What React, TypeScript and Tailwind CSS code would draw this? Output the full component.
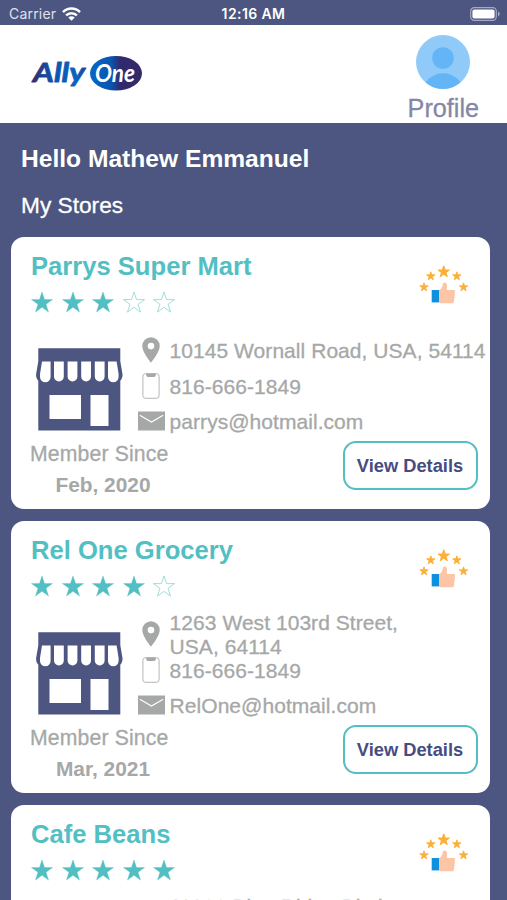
import clsx from "clsx";

interface Store {
  name: string;
  rating: number;
  address: string[];
  phone: string;
  email: string;
  since: string;
}

const stores: Store[] = [
  {
    name: "Parrys Super Mart",
    rating: 3,
    address: ["10145 Wornall Road, USA, 54114"],
    phone: "816-666-1849",
    email: "parrys@hotmail.com",
    since: "Feb, 2020",
  },
  {
    name: "Rel One Grocery",
    rating: 4,
    address: ["1263 West 103rd Street,", "USA, 64114"],
    phone: "816-666-1849",
    email: "RelOne@hotmail.com",
    since: "Mar, 2021",
  },
  {
    name: "Cafe Beans",
    rating: 5,
    address: ["11900 Blue Ridge Blvd,", "USA, 64134"],
    phone: "816-666-1849",
    email: "CafeBeans@hotmail.com",
    since: "Apr, 2021",
  },
];

const STAR = "12,0.5 14.8,8.9 23.5,8.9 16.4,14 19.1,22.5 12,17.3 4.9,22.5 7.6,14 0.5,8.9 9.2,8.9";

const Logo = () => (
  <svg className="h-[40px] w-[114px]" viewBox="0 0 114 40">
    <defs>
      <linearGradient id="ally" x1="0" x2="1" y1="0" y2="0">
        <stop offset="0" stopColor="#352a6b" />
        <stop offset="0.4" stopColor="#0b55b0" />
        <stop offset="0.85" stopColor="#0a62c0" />
        <stop offset="1" stopColor="#24408f" />
      </linearGradient>
      <linearGradient id="oval" x1="0" x2="1" y1="0" y2="0">
        <stop offset="0" stopColor="#0a66c4" />
        <stop offset="0.4" stopColor="#0756b2" />
        <stop offset="0.58" stopColor="#302a6e" />
        <stop offset="1" stopColor="#332a68" />
      </linearGradient>
    </defs>
    <text x="3" y="28.5" textLength="52" lengthAdjust="spacingAndGlyphs" fontFamily="Lato, sans-serif" fontWeight="700" fontStyle="italic" fontSize="27" fill="url(#ally)" stroke="url(#ally)" strokeWidth="0.8" strokeLinejoin="round">Ally</text>
    <ellipse cx="86" cy="20.3" rx="26" ry="17.3" fill="url(#oval)" />
    <text x="65" y="28.5" textLength="40" lengthAdjust="spacingAndGlyphs" fontFamily="Lato, sans-serif" fontWeight="700" fontStyle="italic" fontSize="24" fill="#fff">One</text>
  </svg>
);

const WifiIcon = () => (
  <svg className="h-[14px] w-[19px]" viewBox="0 0 19 14" fill="none" stroke="#fff" strokeWidth="2.5">
    <path d="M1 5.1a12 12 0 0 1 17 0" />
    <path d="M4.1 8.4a7.6 7.6 0 0 1 10.8 0" />
    <path d="M9.5 13.8 6.3 10.6a4.6 4.6 0 0 1 6.4 0z" fill="#fff" stroke="none" />
  </svg>
);

const BatteryIcon = () => (
  <svg className="h-[14px] w-[31px]" viewBox="0 0 31 14">
    <rect x="0.7" y="0.7" width="25.6" height="12.6" rx="3.6" fill="none" stroke="#a5a9c5" strokeWidth="1.2" />
    <rect x="2.4" y="2.4" width="22.2" height="9.2" rx="2" fill="#fff" />
    <path d="M28 4.6c2.3.9 2.3 3.9 0 4.8z" fill="#a5a9c5" />
  </svg>
);

const Avatar = () => (
  <svg className="h-[54px] w-[54px]" viewBox="0 0 54 54">
    <defs>
      <clipPath id="face">
        <circle cx="27" cy="27" r="27" />
      </clipPath>
    </defs>
    <circle cx="27" cy="27" r="27" fill="#90caf9" />
    <circle cx="27" cy="23" r="10.8" fill="#64b5f6" />
    <ellipse cx="27" cy="56" rx="20" ry="17.7" fill="#64b5f6" clipPath="url(#face)" />
  </svg>
);

const Rating = ({ value }: { value: number }) => (
  <div className="flex h-[24px] items-center gap-[8.6px]">
    {[1, 2, 3, 4, 5].map((n) => (
      <svg key={n} className="h-[22px] w-[22px]" viewBox="0 0 24 23">
        <polygon
          points={STAR}
          className={clsx(n <= value ? "fill-[#52bfc3] stroke-[#52bfc3]" : "fill-none stroke-[#8fd6d5]")}
          strokeWidth={n <= value ? 0.4 : 0.9}
        />
      </svg>
    ))}
  </div>
);

const ThumbIcon = () => (
  <svg className="h-[40px] w-[50px]" viewBox="0 0 50 40">
    {[
      [0.2, 17.2, 9.6],
      [7, 6.2, 9.6],
      [18.5, 0.2, 12.5],
      [33, 6.2, 9.6],
      [39.7, 17.2, 9.6],
    ].map(([x, y, s]) => (
      <svg key={x} x={x} y={y} width={s} height={s} viewBox="-1 -1 26 26">
        <polygon points={STAR} fill="#fbb03b" stroke="#fbb03b" strokeWidth="2.4" strokeLinejoin="round" />
      </svg>
    ))}
    <rect x="12.7" y="25" width="7.6" height="12.4" fill="#0f90df" />
    <path d="M20.3 25.4c2.4-1.4 3.1-3.5 3.6-6.3.4-2.6 4-2 4.1.9l-.2 5h6.9c1.8 0 2 2.3.7 3 1 1 .8 2.3-.1 3 .9.9.6 2.3-.5 2.9.8 1.3.2 4.4-1.7 4.4H20.3z" fill="#fcc5a5" />
  </svg>
);

const StoreIcon = () => (
  <svg className="h-[83px] w-[87px]" viewBox="0 0 87 83">
    <path d="M2.3.3h82v13l2.2 13c.2 3-.7 5-2.2 6.5V82.5h-82V32.8C.8 31.3-.1 29.3.1 26.3l2.2-13z" fill="#4c5680" />
    <path d="M6 13.5h8.6v15.4a5 5 0 0 1-10.6 0v-3z" fill="#fff" />
    <path d="M18 13.5h9.8v15a4.9 4.9 0 0 1-9.8 0z" fill="#fff" />
    <path d="M31.6 13.5h9.8v15a4.9 4.9 0 0 1-9.8 0z" fill="#fff" />
    <path d="M45.2 13.5h9.8v15a4.9 4.9 0 0 1-9.8 0z" fill="#fff" />
    <path d="M58.8 13.5h9.8v15a4.9 4.9 0 0 1-9.8 0z" fill="#fff" />
    <path d="M72 13.5h8.6l2 12.4v3a5 5 0 0 1-10.6 0z" fill="#fff" />
    <rect x="13.5" y="47" width="31.5" height="24" fill="#fff" />
    <rect x="54.5" y="47" width="18" height="31" fill="#fff" />
  </svg>
);

const PinIcon = () => (
  <svg className="h-[26px] w-[18px]" viewBox="0 0 18 26">
    <path fillRule="evenodd" d="M9 .3a8.7 8.7 0 0 0-8.7 8.7c0 6.3 8.7 16.7 8.7 16.7s8.7-10.4 8.7-16.7A8.7 8.7 0 0 0 9 .3zm0 5.5a3.3 3.3 0 1 1 0 6.6 3.3 3.3 0 0 1 0-6.6z" fill="#a6a8a7" />
  </svg>
);

const PhoneIcon = () => (
  <svg className="h-[26px] w-[18px]" viewBox="0 0 18 26">
    <rect x="0.9" y="0.7" width="16.2" height="24.6" rx="2.6" fill="none" stroke="#b4b5b5" strokeWidth="1" />
    <path d="M4 .5h10c-.2 2.8-.8 3.5-2 3.5H6C4.8 4 4.2 3.3 4 .5z" fill="#a6a8a7" />
  </svg>
);

const MailIcon = () => (
  <svg className="h-[20px] w-[27px]" viewBox="0 0 27 20">
    <rect y="0.5" width="27" height="19" fill="#a6a8a7" />
    <path d="M1.8 4.2 13.5 11l11.7-6.8" fill="none" stroke="#fff" strokeWidth="1.1" />
  </svg>
);

const StoreCard = ({ store }: { store: Store }) => {
  return (
    <div className="flex h-[272px] shrink-0 flex-col rounded-[13px] bg-white pl-5">
      <div className="flex justify-between pr-[21.5px]">
        <div className="pt-[14px]">
          <h2 className="h-[30px] text-[25.6px] leading-[30px] font-bold text-[#52bfc3]">{store.name}</h2>
          <div className="mt-[9px]">
            <Rating value={store.rating} />
          </div>
        </div>
        <div className="pt-[28px]">
          <ThumbIcon />
        </div>
      </div>

      <div className="mt-5 flex text-[21px] leading-6 tracking-[0.05px] whitespace-nowrap text-[#a6a8a7] [-webkit-text-stroke:0.3px]">
        <div className="w-[106.6px] pt-[14px] pl-[5px]">
          <StoreIcon />
        </div>
        <div>
          <div className="flex h-[35px] items-center gap-[5px]">
            <div className="flex w-[27px] justify-center pb-[3px]"><PinIcon /></div>
            <div className="pb-[2px]">{store.address.map((line) => <p key={line}>{line}</p>)}</div>
          </div>
          <div className="flex h-[36px] items-center gap-[5px]">
            <div className="flex w-[27px] justify-center pb-[3px]"><PhoneIcon /></div>
            <p>{store.phone}</p>
          </div>
          <div className="flex h-[35px] items-center gap-[5px]">
            <div className="flex w-[27px] justify-center pb-[3px]"><MailIcon /></div>
            <p className="pb-[2px]">{store.email}</p>
          </div>
        </div>
      </div>

      <div className="flex justify-between pr-[12.5px]">
        <div className="-mt-[2px] w-[144px] text-[21.2px] leading-[31px] text-[#a6a8a7]">
          <p className="-ml-[1px] tracking-[0.15px] [-webkit-text-stroke:0.3px]">Member Since</p>
          <p className="text-center text-[20.9px] font-bold">{store.since}</p>
        </div>
        <button className="mt-[1px] h-[49px] w-[135px] rounded-[13px] border-[2.5px] border-[#52bfc3] text-[18.3px] font-bold whitespace-nowrap text-[#474c80]">
          View Details
        </button>
      </div>
    </div>
  );
};

export default function App() {
  return (
    <div className="flex h-[900px] w-[507px] flex-col overflow-hidden bg-[#4c5680] font-['Liberation_Sans',Arial,sans-serif]">
      <div className="grid h-[25px] shrink-0 grid-cols-3 items-center px-[6px] pt-[2px] font-['Inter',sans-serif] text-white">
        <div className="flex items-center gap-[6px] pl-[3px]">
          <span className="text-[14px] tracking-[0.2px] text-[#dfe1ee]">Carrier</span>
          <WifiIcon />
        </div>
        <span className="text-center text-[14px] font-semibold tracking-[0.4px]">12:16 AM</span>
        <div className="flex justify-end"><BatteryIcon /></div>
      </div>

      <header className="flex h-[98px] shrink-0 items-start justify-between bg-white pr-[28px] pl-[30px]">
        <div className="pt-[28px]">
          <Logo />
        </div>
        <div className="flex flex-col items-center pt-[10px]">
          <Avatar />
          <span className="mt-[4px] text-[25.2px] leading-[30px] text-[#8686a6] [-webkit-text-stroke:0.3px]">Profile</span>
        </div>
      </header>

      <div className="flex h-[114px] shrink-0 flex-col px-[21px] pt-[21px] text-white">
        <h1 className="text-[24.6px] leading-[30px] font-bold">Hello Mathew Emmanuel</h1>
        <p className="mt-[16px] text-[22.7px] leading-[30px] [-webkit-text-stroke:0.3px]">My Stores</p>
      </div>

      <main className="flex flex-col gap-3 pr-[17px] pl-[11px]">
        {stores.map((store) => (
          <StoreCard key={store.name} store={store} />
        ))}
      </main>
    </div>
  );
}
